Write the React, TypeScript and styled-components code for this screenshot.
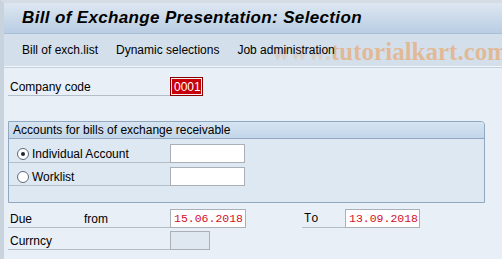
import React from 'react';
import styled, { createGlobalStyle } from 'styled-components';

const GlobalStyles = createGlobalStyle`
    html, body {
        margin: 0;
        padding: 0;
        background: #e9eff6;
    }
    body {
        font-family: Tahoma, 'Liberation Sans', Arial, sans-serif;
        font-size: 12px;
        color: #000;
    }
`;

const Frame = styled.div`
    position: relative;
    width: 502px;
    height: 259px;
    overflow: hidden;
    box-sizing: border-box;
    border-top: 3px solid #d6dce3;
    border-left: 4px solid #c9d3de;
    background: #e9eff6;
`;

const TitleBar = styled.div`
    height: 30px;
    display: flex;
    align-items: center;
    padding-left: 18px;
    background: linear-gradient(#dde7f1, #b9cde3);
    border-bottom: 1px solid #a9bfd6;
`;

const Title = styled.h1`
    margin: 0;
    font-family: 'Liberation Sans', Arial, sans-serif;
    font-size: 17px;
    font-weight: bold;
    font-style: italic;
    letter-spacing: 0.35px;
`;

const Toolbar = styled.div`
    height: 32px;
    display: flex;
    align-items: center;
    gap: 18px;
    padding-left: 18px;
    background: #d3dfeb;
    border-bottom: 1px solid #f4f7fa;
    box-shadow: 0 1px 0 #c3cfdb;
`;

const ToolItem = styled.span`
    position: relative;
    z-index: 1;
    font-size: 12px;
`;

const Content = styled.div`
    padding: 10px 19px 0 4px;
`;

const Row = styled.div<{ $top?: number }>`
    display: flex;
    align-items: flex-end;
    height: 19px;
    margin-top: ${(p) => p.$top ?? 0}px;
`;

const Label = styled.div<{ $width: number }>`
    width: ${(p) => p.$width}px;
    height: 18px;
    box-sizing: border-box;
    display: flex;
    align-items: center;
    padding-left: 2px;
    border-bottom: 1px solid #b4bec8;
`;

const SubLabel = styled.span`
    margin-left: 52px;
`;

const MonoLabel = styled(Label)`
    font-family: 'Liberation Mono', 'Courier New', monospace;
    font-size: 12px;
`;

const Field = styled.div<{ $width: number; $kind?: 'red' | 'date' | 'empty' | 'disabled' }>`
    width: ${(p) => p.$width}px;
    height: 19px;
    box-sizing: border-box;
    display: flex;
    align-items: center;
    padding-left: 3px;
    font-family: ${(p) =>
        p.$kind === 'red'
            ? "Tahoma, 'Liberation Sans', Arial, sans-serif"
            : "'Liberation Mono', 'Courier New', monospace"};
    font-size: ${(p) => (p.$kind === 'red' ? '12px' : '11.5px')};
    border: 1px solid ${(p) => (p.$kind === 'red' ? '#8a0000' : '#a9b0b8')};
    background: ${(p) =>
        p.$kind === 'red' ? '#c8000a' : p.$kind === 'disabled' ? '#dfe8f1' : '#ffffff'};
    color: ${(p) => (p.$kind === 'red' ? '#ffffff' : '#d0102a')};
    box-shadow: ${(p) => (p.$kind === 'red' ? 'inset 0 0 0 1px #f2f2f2' : 'none')};
`;

const Spacer = styled.div<{ $width: number }>`
    width: ${(p) => p.$width}px;
`;

const Group = styled.div`
    margin-top: 25px;
    width: 475px;
    border: 1px solid #8fa7c0;
    border-radius: 0 4px 0 0;
    background: #dde8f2;
    padding-bottom: 16px;
`;

const GroupHeader = styled.div`
    height: 16px;
    display: flex;
    align-items: center;
    padding-left: 4px;
    background: linear-gradient(#d7e4f1, #c2d6ea);
    border-bottom: 1px solid #8fa7c0;
    border-radius: 0 3px 0 0;
`;

const RadioRow = styled.div<{ $top: number }>`
    display: flex;
    align-items: flex-end;
    margin-top: ${(p) => p.$top}px;
`;

const RadioLabel = styled.label`
    width: 161px;
    height: 17px;
    box-sizing: border-box;
    display: flex;
    align-items: center;
    gap: 3px;
    padding-left: 8px;
    border-bottom: 1px solid #b4bec8;
`;

const RadioDot = styled.span<{ $checked?: boolean }>`
    width: 12px;
    height: 12px;
    box-sizing: border-box;
    border-radius: 50%;
    border: 1px solid #5d6b79;
    background: #ffffff;
    display: flex;
    align-items: center;
    justify-content: center;
    &::after {
        content: '';
        width: 4px;
        height: 4px;
        border-radius: 50%;
        background: ${(p) => (p.$checked ? '#1d2733' : 'transparent')};
    }
`;

const Watermark = styled.div`
    position: absolute;
    left: 268px;
    top: 35px;
    font-family: 'Liberation Serif', 'Times New Roman', serif;
    font-weight: bold;
    font-size: 25px;
    color: rgba(236, 160, 92, 0.6);
    white-space: nowrap;
    pointer-events: none;
`;

const Faint = styled.span`
    color: rgba(236, 160, 92, 0.25);
`;

export default function App() {
    return (
        <Frame>
            <GlobalStyles />
            <TitleBar>
                <Title>Bill of Exchange Presentation: Selection</Title>
            </TitleBar>
            <Toolbar>
                <ToolItem>Bill of exch.list</ToolItem>
                <ToolItem>Dynamic selections</ToolItem>
                <ToolItem>Job administration</ToolItem>
            </Toolbar>
            <Content>
                <Row>
                    <Label $width={162}>Company code</Label>
                    <Field $width={33} $kind="red">0001</Field>
                </Row>
                <Group>
                    <GroupHeader>Accounts for bills of exchange receivable</GroupHeader>
                    <RadioRow $top={5}>
                        <RadioLabel>
                            <RadioDot $checked />
                            Individual Account
                        </RadioLabel>
                        <Field $width={75} $kind="empty" />
                    </RadioRow>
                    <RadioRow $top={4}>
                        <RadioLabel>
                            <RadioDot />
                            Worklist
                        </RadioLabel>
                        <Field $width={75} $kind="empty" />
                    </RadioRow>
                </Group>
                <Row $top={6}>
                    <Label $width={162}>
                        Due<SubLabel>from</SubLabel>
                    </Label>
                    <Field $width={76} $kind="date">15.06.2018</Field>
                    <Spacer $width={56} />
                    <MonoLabel $width={43}>To</MonoLabel>
                    <Field $width={75} $kind="date">13.09.2018</Field>
                </Row>
                <Row $top={3}>
                    <Label $width={162}>Currncy</Label>
                    <Field $width={40} $kind="disabled" />
                </Row>
            </Content>
            <Watermark>
                <Faint>www.</Faint>tutorialkart.com
            </Watermark>
        </Frame>
    );
}
